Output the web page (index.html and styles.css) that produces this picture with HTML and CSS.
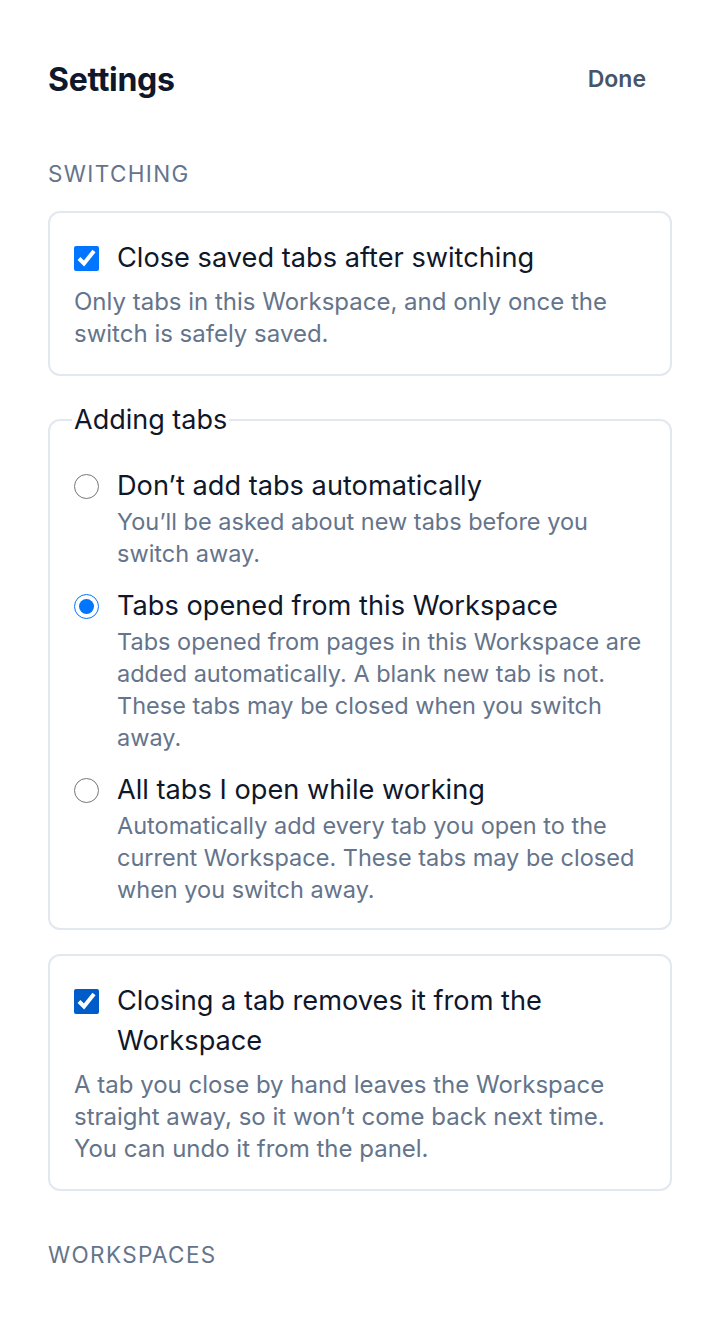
FILE: index.html
```html
<!DOCTYPE html>
<html lang="en">
<head>
<meta charset="utf-8">
<title>Settings</title>
<link rel="stylesheet" href="styles.css">
</head>
<body>
<main class="page">
  <header class="header">
    <h1 class="title">Settings</h1>
    <button class="done" type="button">Done</button>
  </header>

  <h2 class="section-title">Switching</h2>

  <div class="stack">
    <div class="card">
      <label class="check-row">
        <input type="checkbox" class="check" checked>
        <span class="label">Close saved tabs after switching</span>
      </label>
      <p class="desc">Only tabs in this Workspace, and only once the switch is safely saved.</p>
    </div>

    <fieldset class="card fieldset">
      <legend class="legend">Adding tabs</legend>
      <div class="options">
        <label class="option">
          <input type="radio" name="adding" class="radio">
          <span class="option-text">
            <span class="label">Don’t add tabs automatically</span>
            <span class="option-desc">You’ll be asked about new tabs before you switch away.</span>
          </span>
        </label>
        <label class="option">
          <input type="radio" name="adding" class="radio" checked>
          <span class="option-text">
            <span class="label">Tabs opened from this Workspace</span>
            <span class="option-desc">Tabs opened from pages in this Workspace are added automatically. A blank new tab is not. These tabs may be closed when you switch away.</span>
          </span>
        </label>
        <label class="option">
          <input type="radio" name="adding" class="radio">
          <span class="option-text">
            <span class="label">All tabs I open while working</span>
            <span class="option-desc">Automatically add every tab you open to the current Workspace. These tabs may be closed when you switch away.</span>
          </span>
        </label>
      </div>
    </fieldset>

    <div class="card">
      <label class="check-row">
        <input type="checkbox" class="check check-hover" checked>
        <span class="label">Closing a tab removes it from the Workspace</span>
      </label>
      <p class="desc">A tab you close by hand leaves the Workspace straight away, so it won’t come back next time. You can undo it from the panel.</p>
    </div>
  </div>

  <h2 class="section-title section-title-spaced">Workspaces</h2>
</main>
</body>
</html>
```

FILE: styles.css
```css
* { box-sizing: border-box; }

html, body {
  margin: 0;
  background: #ffffff;
}

body {
  font-family: Inter, "Noto Sans", "Liberation Sans", sans-serif;
  color: #0f172a;
}

.page {
  padding: 48px 48px 48px 48px;
}

.header {
  display: flex;
  align-items: center;
  justify-content: space-between;
  height: 62px;
}

.title {
  margin: 0;
  font-size: 32px;
  font-weight: 700;
  color: #0f172a;
  letter-spacing: -0.01em;
}

.done {
  border: 0;
  background: transparent;
  font-family: inherit;
  font-size: 23px;
  font-weight: 600;
  color: #475569;
  padding: 8px 26px;
  margin-right: 0;
  cursor: pointer;
}

.section-title {
  margin: 50px 0 23px;
  font-size: 22.5px;
  line-height: 28px;
  font-weight: 400;
  text-transform: uppercase;
  letter-spacing: 0.06em;
  color: #64748b;
}

.section-title-spaced {
  margin-top: 50px;
}

.stack {
  display: flex;
  flex-direction: column;
  gap: 24px;
}

.card {
  border: 2px solid #e2e8f0;
  border-radius: 12px;
  padding: 25px 24px 24px;
  margin: 0;
}

.fieldset {
  padding-top: 26px;
  padding-bottom: 22px;
  min-width: 0;
}

.legend {
  font-size: 27px;
  line-height: 40px;
  padding: 0 2px;
  margin-left: -2px;
  color: #0f172a;
}

.check-row {
  display: flex;
  align-items: flex-start;
  gap: 18px;
  cursor: pointer;
}

.check, .radio {
  flex: none;
  width: 25px;
  height: 25px;
  margin: 8px 0 0 0;
}

.check-hover {
  accent-color: #005cc8;
}

.label {
  font-size: 27.2px;
  line-height: 40px;
  color: #0f172a;
}

.desc {
  margin: 8px 0 0;
  font-size: 24px;
  line-height: 32px;
  color: #64748b;
}

.options {
  display: flex;
  flex-direction: column;
  gap: 16px;
}

.option {
  display: flex;
  align-items: flex-start;
  gap: 18px;
  cursor: pointer;
}

.option-text {
  display: flex;
  flex-direction: column;
}

.option-desc {
  font-size: 23.5px;
  line-height: 32px;
  color: #64748b;
}
```
